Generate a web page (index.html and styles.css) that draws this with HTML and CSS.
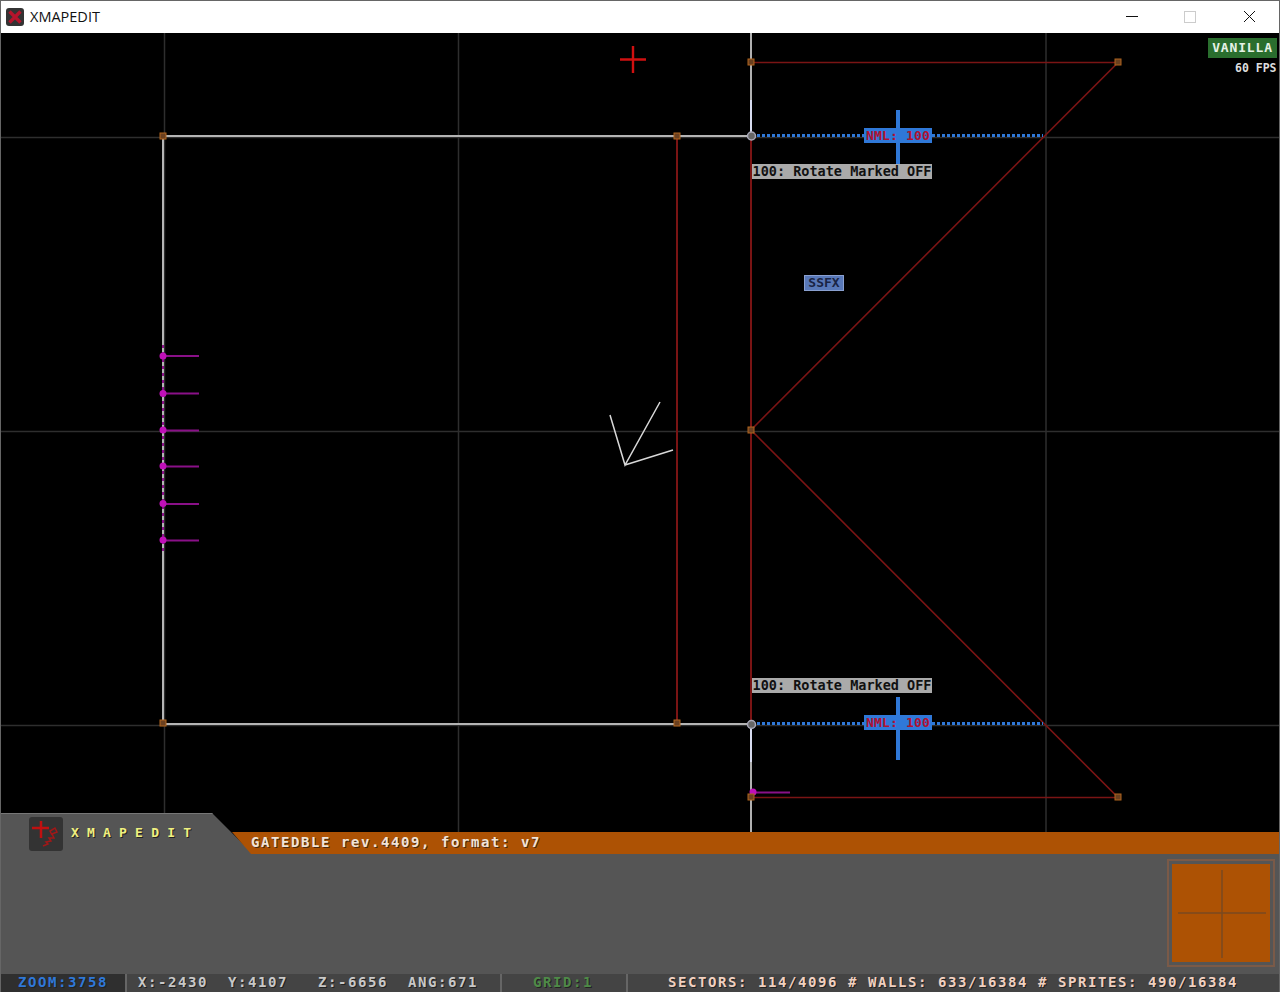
FILE: index.html
```html
<!doctype html>
<html>
<head>
<meta charset="utf-8">
<title>XMAPEDIT</title>
<link rel="stylesheet" href="styles.css">
</head>

<body>
<div class="window">
	<div class="titlebar">
		<svg class="appicon" width="20" height="20" viewBox="0 0 20 20">
			<rect x="1" y="1" width="18" height="18" rx="3" fill="#333"/>
			<path d="M4.5 4.5L15.5 15.5M15.5 4.5L4.5 15.5" stroke="#b5142c" stroke-width="3.4"/>
		</svg>
		<span class="apptitle">XMAPEDIT</span>
		<div class="winbtns">
			<svg width="58" height="32" viewBox="0 0 58 32"><path d="M18 15.5H30" stroke="#111"/></svg>
			<svg width="60" height="32" viewBox="0 0 60 32"><rect x="18.5" y="10.5" width="11" height="11" fill="none" stroke="#ccc"/></svg>
			<svg width="53" height="32" viewBox="0 0 53 32"><path d="M18 10L29 21M29 10L18 21" stroke="#111"/></svg>
		</div>
	</div>

	<div class="workspace">
		<svg class="map" width="1278" height="959" viewBox="1 33 1278 959">
			<!-- grid -->
			<g stroke="#2e2e2e" stroke-width="1.5" fill="none">
				<path d="M164.5 33V832M458.5 33V832M1046 33V832"/>
				<path d="M1 137.5H1279M1 431.5H1279M1 725.5H1279"/>
			</g>
			<!-- one sided walls -->
			<path d="M751 62.5H1118L751 430L1118 797.5H751" stroke="#7a1414" stroke-width="1.6" fill="none"/>
			<path d="M677 136V723M751 136V797" stroke="#7a1414" stroke-width="2" fill="none"/>
			<!-- white walls -->
			<path d="M677 136H163V724H677" stroke="#b4b4b4" stroke-width="2" fill="none"/>
			<path d="M677 136H751M677 724H751" stroke="#b4b4b4" stroke-width="2" fill="none"/>
			<path d="M751 33V100M751 762V832" stroke="#b0b0b0" stroke-width="2" fill="none"/>
			<path d="M751 100V136M751 725V762" stroke="#d8dcf0" stroke-width="2" fill="none"/>
			<!-- wall sprites -->
			<path d="M163 345V552" stroke="#8a1088" stroke-width="2" stroke-dasharray="3 4" fill="none"/>
			<path d="M163 356H199M163 393.5H199M163 430.5H199M163 466.5H199M163 504H199M163 540.5H199M753 792.5H790" stroke="#8a1088" stroke-width="2" fill="none"/>
			<g fill="#c010b8">
				<circle cx="163" cy="356" r="3.5"/>
				<circle cx="163" cy="393.5" r="3.5"/>
				<circle cx="163" cy="430" r="3.5"/>
				<circle cx="163" cy="466" r="3.5"/>
				<circle cx="163" cy="503.5" r="3.5"/>
				<circle cx="163" cy="540" r="3.5"/>
				<circle cx="753" cy="792" r="3.5"/>
			</g>
			<!-- red sector joints -->
			<path d="M757 135.5H1043M757 723.5H1043" stroke="#2f78d8" stroke-width="3" stroke-dasharray="3 2" fill="none"/>
			<path d="M898 110V165M898 697V760" stroke="#2f78d8" stroke-width="4" fill="none"/>
			<!-- player arrow -->
			<path d="M660 402L625 465L610 415M625 465L673 450" stroke="#d8d8d8" stroke-width="1.5" fill="none"/>
			<!-- cursor -->
			<path d="M620 59.5H646M633 46V73" stroke="#d01010" stroke-width="2.4" fill="none"/>
			<!-- vertices -->
			<g fill="#6a4020" stroke="#b0641e">
				<rect x="160" y="133" width="6" height="6"/>
				<rect x="674" y="133" width="6" height="6"/>
				<rect x="160" y="720" width="6" height="6"/>
				<rect x="674" y="720" width="6" height="6"/>
				<rect x="748" y="59" width="6" height="6"/>
				<rect x="1115" y="59" width="6" height="6"/>
				<rect x="748" y="427" width="6" height="6"/>
				<rect x="1115" y="794" width="6" height="6"/>
				<rect x="748" y="794" width="6" height="6"/>
			</g>
			<g fill="#666" stroke="#a8a8b8" stroke-width="1.5">
				<circle cx="751.5" cy="136" r="4"/>
				<circle cx="751.5" cy="724.5" r="4"/>
			</g>
		</svg>

		<div class="tag nml nml-top">NML: 100</div>
		<div class="tag nml nml-bottom">NML: 100</div>
		<div class="tag cmd cmd-top">100: Rotate Marked OFF</div>
		<div class="tag cmd cmd-bottom">100: Rotate Marked OFF</div>
		<div class="tag ssfx">SSFX</div>
		<div class="tag vanilla">VANILLA</div>
		<div class="fps">60 FPS</div>

		<div class="hud">
			<div class="hud-top">
				<div class="hud-tab">
					<svg class="logo" width="34" height="34" viewBox="0 0 34 34">
						<rect width="34" height="34" rx="3" fill="#333"/>
						<path d="M3 11H20M12 4V21" stroke="#c01010" stroke-width="2.5" fill="none"/>
						<path d="M14 29L19 27L17 25L22 24L20 21L25 21L23 17L28 15L26 11L21 14L23 18" stroke="#a01818" stroke-width="1.5" fill="none"/>
					</svg>
					<span class="hud-name">XMAPEDIT</span>
				</div>
				<div class="hud-msg">GATEDBLE rev.4409, format: v7</div>
			</div>
			<div class="hud-body">
				<div class="compass">
					<svg width="98" height="98" viewBox="0 0 98 98">
						<path d="M50 6V94M6 49H94" stroke="#7a4a20" stroke-width="1.5" fill="none"/>
					</svg>
				</div>
			</div>
			<div class="status">
				<div class="cell cell-zoom">ZOOM:3758</div>
				<div class="cell cell-pos">
					<span>X:-2430</span>
					<span>Y:4107</span>
					<span>Z:-6656</span>
					<span>ANG:671</span>
				</div>
				<div class="cell cell-grid">GRID:1</div>
				<div class="cell cell-stats">SECTORS: 114/4096 # WALLS: 633/16384 # SPRITES: 490/16384</div>
			</div>
		</div>
	</div>
</div>
</body>
</html>
```

FILE: styles.css
```css
* {margin:0; padding:0; box-sizing:border-box;}
body {background:#000; font-family:"DejaVu Sans Mono", monospace;}

.window {width:1280px; height:992px; display:flex; flex-direction:column; border:1px solid #666; border-bottom:0;}

.titlebar {height:32px; flex:none; display:flex; align-items:center; background:#fff; padding-left:4px;}
.appicon {flex:none;}
.apptitle {margin:-2px 0 0 5px; font:14.5px "Open Sans", sans-serif; color:#111;}
.winbtns {margin-left:auto; display:flex;}

.workspace {flex:1; position:relative; background:#000; overflow:hidden;}
.map {display:block;}

.tag {position:absolute; font-weight:bold; font-size:12px; line-height:15px; white-space:nowrap; text-align:center;}
.nml {left:863px; width:68px; height:15px; background:#2f78d8; color:#b01030; font-size:13px; letter-spacing:.2px;}
.nml-top {top:95px;}
.nml-bottom {top:682px;}
.cmd {left:751px; width:180px; height:15px; background:#aaa; color:#111; font-size:13.5px;}
.cmd-top {top:131px;}
.cmd-bottom {top:645px;}
.ssfx {left:803px; top:242px; width:40px; height:16px; background:#5878b8; border:1px solid #8aa0d0; color:#1a2444; font-size:13px; line-height:14px;}
.vanilla {left:1207px; top:5px; width:69px; height:20px; background:#2a6e2e; color:#e6f2e6; font-size:13px; line-height:19px; letter-spacing:.85px;}
.fps {position:absolute; left:1234px; top:28px; color:#ddd; font-size:11.5px; font-weight:bold; line-height:14px; white-space:nowrap;}

.hud {position:absolute; left:0; right:0; bottom:0; height:179px; display:flex; flex-direction:column;}
.hud-top {height:41px; flex:none; display:flex;}
.hud-tab {width:252px; flex:none; display:flex; align-items:flex-start; padding:3px 0 0 28px; background:#555; border-top:1px solid #777; clip-path:polygon(0 0, 211px 0, 252px 41px, 0 41px);}
.logo {flex:none;}
.hud-name {margin:9px 0 0 8px; color:#f0f080; font-size:13px; font-weight:bold; line-height:14px; letter-spacing:8.2px; text-shadow:1px 1px 0 #222;}
.hud-msg {flex:1; margin:19px 0 0 -21px; height:22px; padding-left:19px; background:#ad5204; color:#f0e4d8; font-size:14px; font-weight:bold; line-height:21px; letter-spacing:1.57px; white-space:nowrap; text-shadow:1px 1px 0 #4a2a10; clip-path:polygon(0 0, 100% 0, 100% 100%, 19px 100%);}

.hud-body {flex:1; display:flex; justify-content:flex-end; align-items:flex-start; background:#555; padding:5px 4px 0 0;}
.compass {width:108px; height:108px; padding:3px; border:2px solid #7a5a48; display:flex;}
.compass svg {display:block; background:#ad5204;}

.status {height:18px; flex:none; display:flex; gap:2px; background:#666; font-size:14px; font-weight:bold; line-height:17px; letter-spacing:1.57px; white-space:nowrap; text-shadow:1px 1px 0 #222;}
.cell {background:#444; height:18px;}
.cell-zoom {width:124px; padding-left:17px; background:#2f2f2f; color:#2f78d8;}
.cell-pos {width:373px; padding-left:11px; color:#c8c8c8; display:grid; grid-template-columns:repeat(4, 90px);}
.cell-grid {width:124px; padding-left:31px; color:#4e8a48;}
.cell-stats {flex:1; padding-left:40px; color:#f0d0c0;}
```
